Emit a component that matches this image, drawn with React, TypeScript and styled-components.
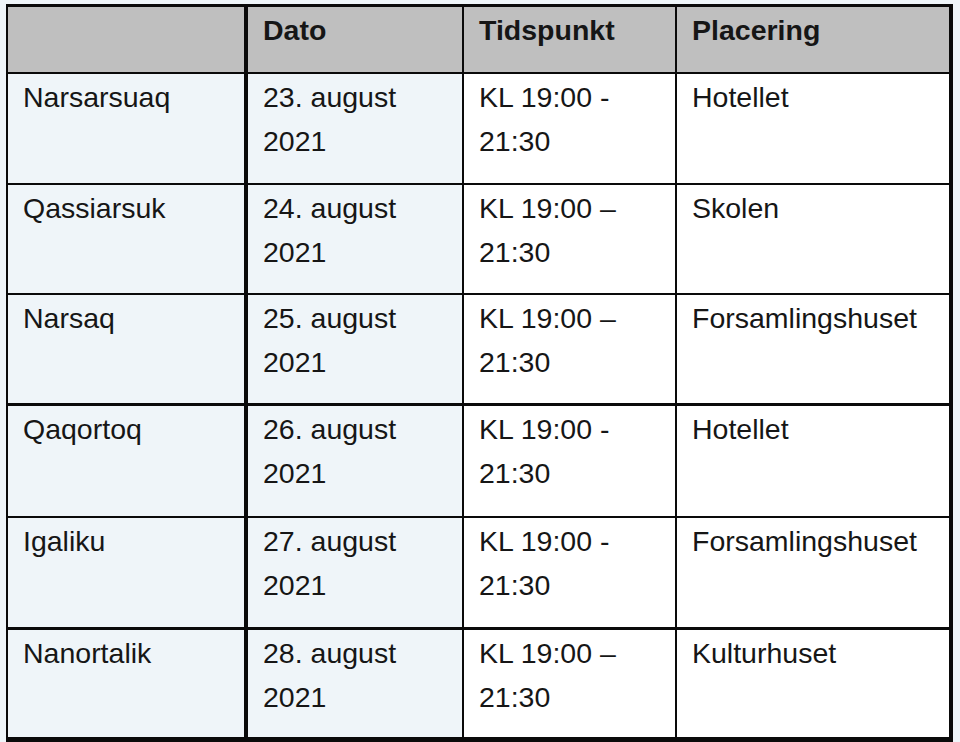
import React from 'react';
import styled, { createGlobalStyle } from 'styled-components';

interface Meeting {
  town: string;
  date: string;
  time: string;
  place: string;
  rule: number; // thickness of the line under the row
  height: number; // row height, line included
}

const GlobalStyle = createGlobalStyle`
  html, body {
    margin: 0;
    padding: 0;
    background: #eff5f9;
  }
`;

const Page = styled.div`
  padding: 4px 7px 0 6px;
  font-family: 'Liberation Sans', Arial, Helvetica, sans-serif;
  color: #161616;
`;

const Schedule = styled.div<{ $rows: string }>`
  display: grid;
  grid-template-columns: 240px 216px 213px 272px;
  grid-template-rows: ${props => props.$rows};
  width: fit-content;
  border-style: solid;
  border-color: #0a0a0a;
  border-width: 3px 4px 5px 2px;
`;

const Row = styled.div`
  display: contents;
`;

const Cell = styled.div<{ $col: number; $rule: number; $head?: boolean }>`
  box-sizing: border-box;
  padding: 1px 15px 0 15px;
  font-size: 28.5px;
  line-height: 44px;
  font-weight: ${props => (props.$head ? 700 : 400)};
  border-right: ${props => (props.$col === 0 ? 4 : props.$col === 3 ? 0 : 2)}px solid #0a0a0a;
  border-bottom: ${props => props.$rule}px solid #0a0a0a;
  background: ${props => {
    if (props.$head) return '#bfbfbf';
    return props.$col < 2 ? '#eff5f9' : '#ffffff';
  }};
`;

const headers = ['', 'Dato', 'Tidspunkt', 'Placering'];

const meetings: Meeting[] = [
  { town: 'Narsarsuaq', date: '23. august 2021', time: 'KL 19:00 - 21:30', place: 'Hotellet', rule: 2, height: 111 },
  { town: 'Qassiarsuk', date: '24. august 2021', time: 'KL 19:00 – 21:30', place: 'Skolen', rule: 2, height: 110 },
  { town: 'Narsaq', date: '25. august 2021', time: 'KL 19:00 – 21:30', place: 'Forsamlingshuset', rule: 3, height: 111 },
  { town: 'Qaqortoq', date: '26. august 2021', time: 'KL 19:00 - 21:30', place: 'Hotellet', rule: 2, height: 112 },
  { town: 'Igaliku', date: '27. august 2021', time: 'KL 19:00 - 21:30', place: 'Forsamlingshuset', rule: 3, height: 112 },
  { town: 'Nanortalik', date: '28. august 2021', time: 'KL 19:00 – 21:30', place: 'Kulturhuset', rule: 0, height: 107 },
];

const App: React.FC = () => {
  const rows = ['67px', ...meetings.map(m => `${m.height}px`)].join(' ');

  return (
    <Page>
      <GlobalStyle />
      <Schedule $rows={rows}>
        <Row>
          {headers.map((label, i) => (
            <Cell key={i} $col={i} $rule={2} $head>
              {label}
            </Cell>
          ))}
        </Row>
        {meetings.map(m => (
          <Row key={m.town}>
            {[m.town, m.date, m.time, m.place].map((text, i) => (
              <Cell key={i} $col={i} $rule={m.rule}>
                {text}
              </Cell>
            ))}
          </Row>
        ))}
      </Schedule>
    </Page>
  );
};

export default App;
